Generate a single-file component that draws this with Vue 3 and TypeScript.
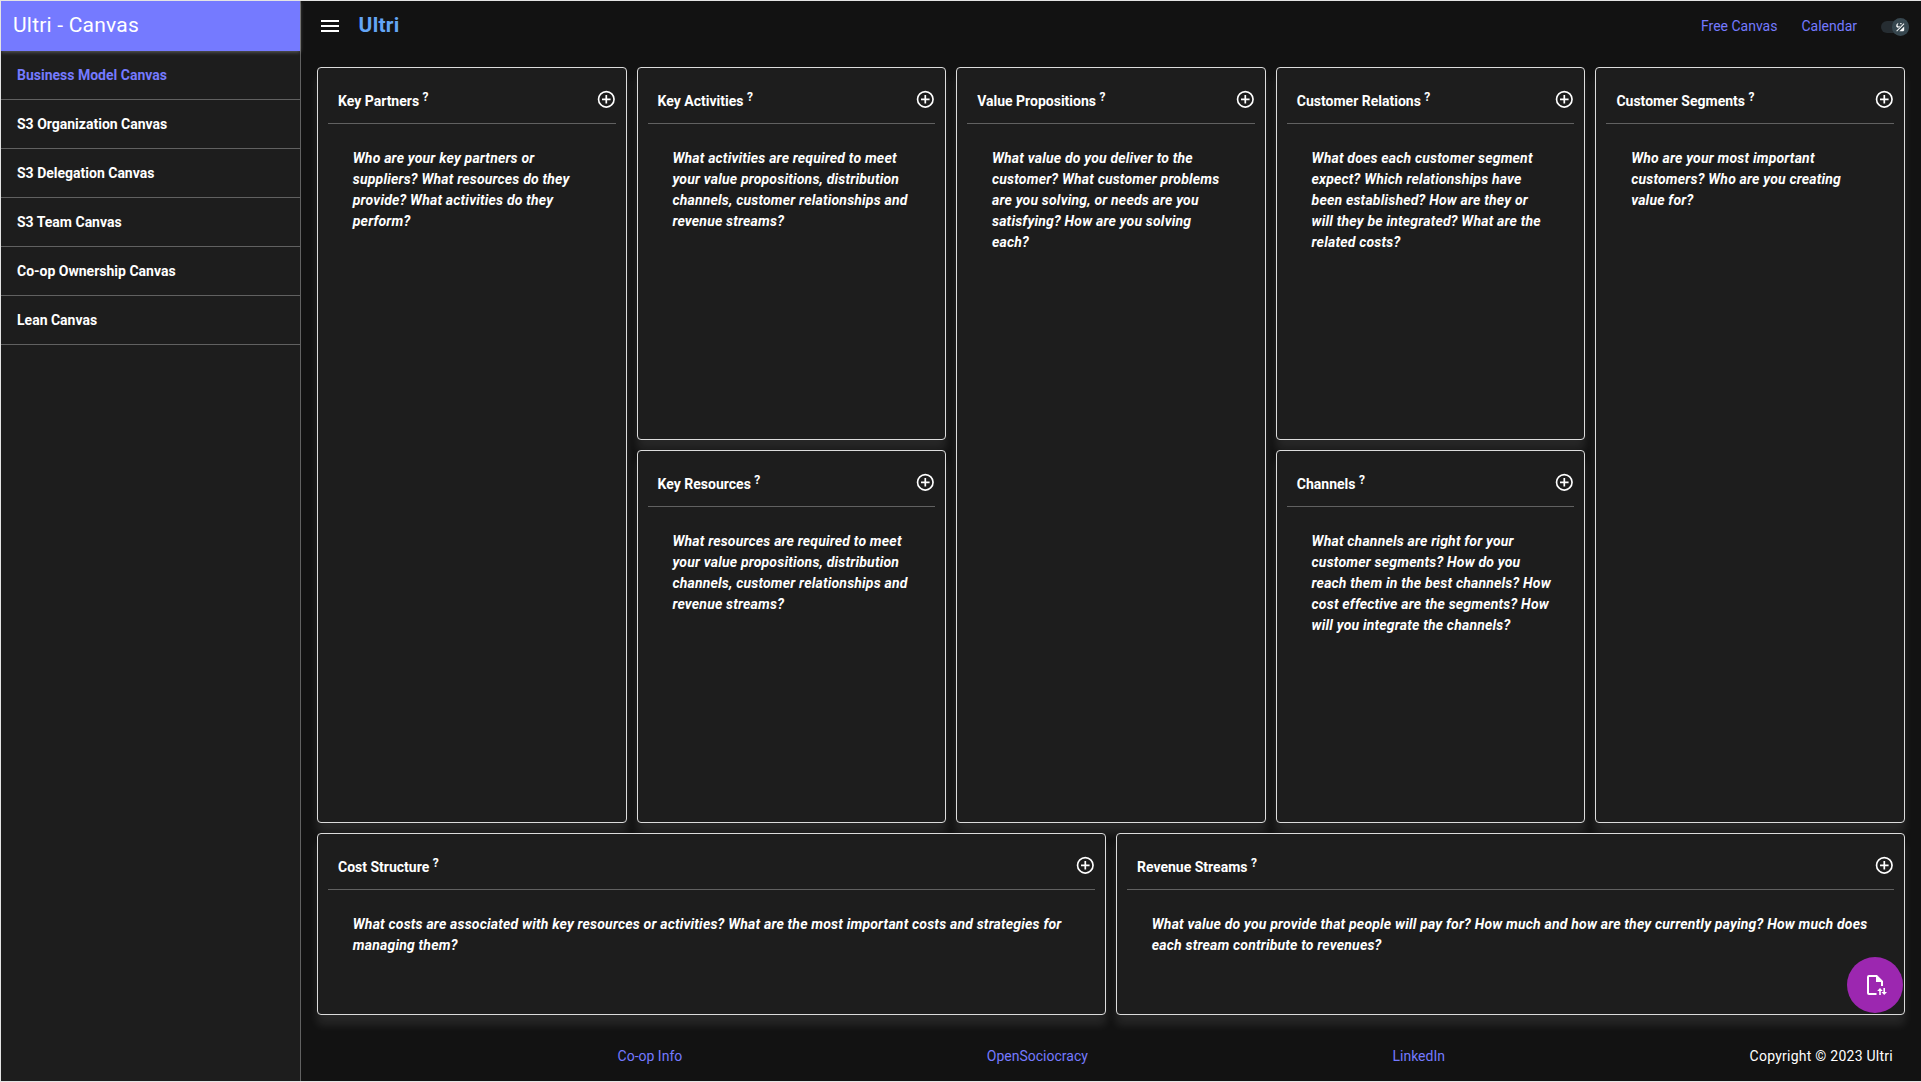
<script setup lang="ts">
interface Section {
  id: string
  title: string
  hint: string
}

const canvases: string[] = [
  'Business Model Canvas',
  'S3 Organization Canvas',
  'S3 Delegation Canvas',
  'S3 Team Canvas',
  'Co-op Ownership Canvas',
  'Lean Canvas',
]

const sections: Section[] = [
  { id: 'partners', title: 'Key Partners', hint: 'Who are your key partners or suppliers? What resources do they provide? What activities do they perform?' },
  { id: 'activities', title: 'Key Activities', hint: 'What activities are required to meet your value propositions, distribution channels, customer relationships and revenue streams?' },
  { id: 'value', title: 'Value Propositions', hint: 'What value do you deliver to the customer? What customer problems are you solving, or needs are you satisfying? How are you solving each?' },
  { id: 'relations', title: 'Customer Relations', hint: 'What does each customer segment expect? Which relationships have been established? How are they or will they be integrated? What are the related costs?' },
  { id: 'segments', title: 'Customer Segments', hint: 'Who are your most important customers? Who are you creating value for?' },
  { id: 'resources', title: 'Key Resources', hint: 'What resources are required to meet your value propositions, distribution channels, customer relationships and revenue streams?' },
  { id: 'channels', title: 'Channels', hint: 'What channels are right for your customer segments? How do you reach them in the best channels? How cost effective are the segments? How will you integrate the channels?' },
  { id: 'costs', title: 'Cost Structure', hint: 'What costs are associated with key resources or activities? What are the most important costs and strategies for managing them?' },
  { id: 'revenue', title: 'Revenue Streams', hint: 'What value do you provide that people will pay for? How much and how are they currently paying? How much does each stream contribute to revenues?' },
]
</script>

<template>
  <div class="app">
    <aside class="drawer">
      <div class="drawer-title">Ultri - Canvas</div>
      <nav class="list">
        <a v-for="(name, i) in canvases" :key="name" class="item" :class="{ active: i === 0 }">{{ name }}</a>
      </nav>
    </aside>
    <div class="page">
      <header class="topbar">
        <svg class="menu" viewBox="0 0 24 24"><path d="M3 6h18v2H3V6m0 5h18v2H3v-2m0 5h18v2H3v-2z" /></svg>
        <span class="brand">Ultri</span>
        <nav class="links">
          <a>Free Canvas</a>
          <a>Calendar</a>
        </nav>
        <div class="toggle">
          <div class="thumb">
            <svg viewBox="0 0 24 24">
              <path d="M3 20 20 3l1.500 1.500L4.500 21.500z" />
              <path d="M10 21 21 10v9l-2 2z" />
              <path d="M3 11V6l3-3h2L6 6v3l3 1 3-2-2 4-4 1z" />
              <path d="M12 2h3v3h-3z" />
            </svg>
          </div>
        </div>
      </header>
      <main class="grid">
        <section v-for="s in sections" :key="s.id" class="card" :class="s.id">
          <div class="card-head">
            <h2>{{ s.title }} <sup>?</sup></h2>
            <svg class="add" viewBox="0 0 24 24"><path d="M12 20c-4.410 0-8-3.590-8-8s3.590-8 8-8 8 3.590 8 8-3.590 8-8 8m0-18A10 10 0 0 0 2 12a10 10 0 0 0 10 10 10 10 0 0 0 10-10A10 10 0 0 0 12 2m1 5h-2v4H7v2h4v4h2v-4h4v-2h-4V7z" /></svg>
          </div>
          <p>{{ s.hint }}</p>
        </section>
      </main>
      <footer class="footer">
        <div class="foot-links">
          <a>Co-op Info</a>
          <a>OpenSociocracy</a>
          <a>LinkedIn</a>
        </div>
        <span class="copy">Copyright © 2023 Ultri</span>
      </footer>
    </div>
    <button class="fab">
      <svg viewBox="0 0 24 24">
        <path d="M14 2H6a2 2 0 0 0-2 2v16a2 2 0 0 0 2 2h7.500v-2H6V4h7v5h5v4h2V8l-6-6z" />
        <path d="M17 15l-2.800 3h2v4h1.600v-4h2zM20.400 15v4h-2l2.800 3 2.800-3h-2v-4z" />
      </svg>
    </button>
  </div>
</template>

<style>
body {
  margin: 0;
  background: #121212;
}
</style>

<style scoped>
.app {
  box-sizing: border-box;
  width: 1921px;
  height: 1082px;
  display: flex;
  position: relative;
  overflow: hidden;
  border: solid #e4e4e4;
  border-width: 1px 0 1px 1px;
  background: #121212;
  color: #fff;
  font: 400 14px/21px Roboto, sans-serif;
}
.drawer {
  box-sizing: border-box;
  width: 300px;
  flex: none;
  background: #1d1d1d;
  border-right: 1px solid #616161;
}
.drawer-title {
  height: 50px;
  padding: 0 12px;
  background: #757aff;
  font-size: 21px;
  line-height: 48px;
  letter-spacing: 0.21px;
  box-shadow: 0 1px 4px rgba(255, 255, 255, 0.3);
}
.item {
  display: flex;
  align-items: center;
  height: 48px;
  padding: 0 16px;
  border-bottom: 1px solid #616161;
  font-weight: 700;
}
.active {
  color: #757aff;
}
.page {
  flex: 1;
  display: flex;
  flex-direction: column;
}
.topbar {
  display: flex;
  align-items: center;
  height: 50px;
  padding: 0 12px 0 17px;
}
.menu {
  width: 24px;
  height: 24px;
  fill: #fff;
}
.brand {
  margin: -2px auto 0 16.600px;
  font-size: 21px;
  font-weight: 700;
  letter-spacing: 0.21px;
  color: #64a5f5;
}
.links {
  display: flex;
  gap: 24px;
  margin-right: 24px;
}
.links a,
.foot-links a {
  color: #757aff;
}
.toggle {
  width: 28px;
  height: 12px;
  margin-top: 2px;
  border-radius: 6px;
  background: #262d32;
  display: flex;
  align-items: center;
  justify-content: flex-end;
}
.thumb {
  width: 17.500px;
  height: 17.500px;
  flex: none;
  border-radius: 50%;
  background: #37474f;
  display: flex;
  align-items: center;
  justify-content: center;
}
.thumb svg {
  width: 10.500px;
  height: 10.500px;
  fill: #fff;
}
.grid {
  display: grid;
  grid-template-columns: repeat(10, 1fr);
  grid-template-rows: 373px 373px 182px;
  grid-template-areas:
    'p p a a v v r r s s'
    'p p k k v v c c s s'
    'o o o o o e e e e e';
  gap: 10px;
  padding: 16px 16px 0;
}
.partners { grid-area: p; }
.activities { grid-area: a; }
.value { grid-area: v; }
.relations { grid-area: r; }
.segments { grid-area: s; }
.resources { grid-area: k; }
.channels { grid-area: c; }
.costs { grid-area: o; }
.revenue { grid-area: e; }
.card {
  min-width: 0;
  padding: 10px;
  background: #1d1d1d;
  border: 1px solid #dcdcdc;
  border-radius: 4px;
  box-shadow: 0 10px 10px rgba(255, 255, 255, 0.09);
}
.card-head {
  display: flex;
  justify-content: space-between;
  align-items: center;
  height: 45px;
  padding: 0 0 0 10px;
  border-bottom: 1px solid #616161;
}
h2 {
  margin: 1px 0 0;
  font-size: 14px;
  line-height: 21px;
  font-weight: 700;
}
sup {
  font-size: 12px;
  line-height: 0;
  vertical-align: baseline;
  position: relative;
  top: -5px;
}
.add {
  width: 20.600px;
  height: 20.600px;
  margin: -2px -0.5px 0 0;
  fill: #fff;
}
.card p {
  margin: 24px 22px 0 24.800px;
  font-style: italic;
  font-weight: 700;
  letter-spacing: 0.19px;
}
.card.value p {
  margin-right: 26px;
}
.footer {
  display: flex;
  align-items: center;
  height: 50px;
  margin-top: 16px;
  padding: 0 28px 0 12px;
}
.foot-links {
  flex: 1;
  display: flex;
  justify-content: space-evenly;
}
.copy {
  letter-spacing: 0.25px;
}
.fab {
  position: absolute;
  right: 18px;
  bottom: 68px;
  width: 56px;
  height: 56px;
  border: 0;
  padding: 0;
  border-radius: 50%;
  background: #9c27b0;
  display: flex;
  align-items: center;
  justify-content: center;
}
.fab svg {
  width: 24px;
  height: 24px;
  fill: #fff;
  overflow: visible;
}
</style>
